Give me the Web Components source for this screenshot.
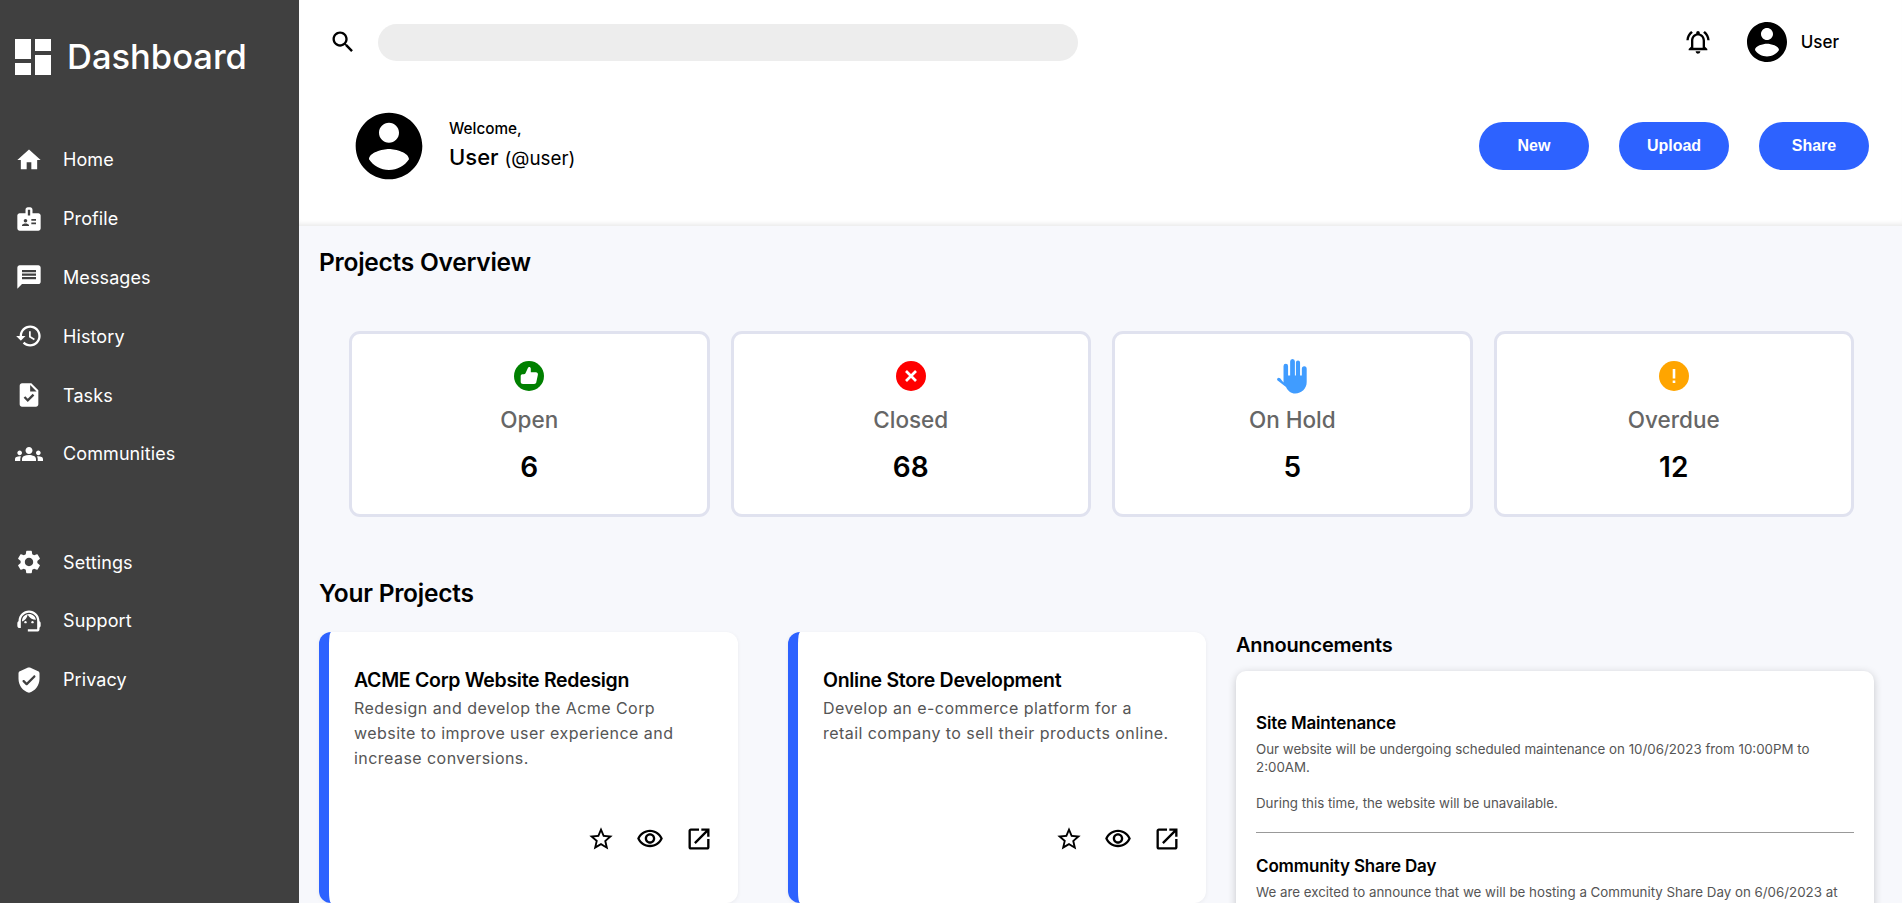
<!DOCTYPE html>
<html lang="en">
<head>
<meta charset="utf-8">
<title>Dashboard</title>
<style>
  html, body { margin: 0; height: 100%; overflow: hidden; }
  body { font-family: Inter, "Liberation Sans", sans-serif; background: #f7f8fc; }
</style>
</head>
<body>
<app-shell>
  <side-bar slot="side">
    <nav-item icon="home">Home</nav-item>
    <nav-item icon="badge">Profile</nav-item>
    <nav-item icon="message">Messages</nav-item>
    <nav-item icon="history">History</nav-item>
    <nav-item icon="task">Tasks</nav-item>
    <nav-item icon="groups">Communities</nav-item>
    <nav-item slot="lower" icon="settings">Settings</nav-item>
    <nav-item slot="lower" icon="support">Support</nav-item>
    <nav-item slot="lower" icon="shield">Privacy</nav-item>
  </side-bar>
  <page-header slot="head">
    <action-button>New</action-button>
    <action-button>Upload</action-button>
    <action-button>Share</action-button>
  </page-header>
  <projects-overview>
    <stat-card kind="open" label="Open" value="6"></stat-card>
    <stat-card kind="closed" label="Closed" value="68"></stat-card>
    <stat-card kind="hold" label="On Hold" value="5"></stat-card>
    <stat-card kind="overdue" label="Overdue" value="12"></stat-card>
  </projects-overview>
  <your-projects>
    <project-card title="ACME Corp Website Redesign">Redesign and develop the Acme Corp website to improve user experience and increase conversions.</project-card>
    <project-card title="Online Store Development">Develop an e-commerce platform for a retail company to sell their products online.</project-card>
    <announce-panel slot="side">
      <announce-item title="Site Maintenance">Our website will be undergoing scheduled maintenance on 10/06/2023 from 10:00PM to 2:00AM.<br><br>During this time, the website will be unavailable.</announce-item>
      <announce-item title="Community Share Day">We are excited to announce that we will be hosting a Community Share Day on 6/06/2023 at</announce-item>
    </announce-panel>
  </your-projects>
</app-shell>

<script>
const ICONS = {
  dashboard: '<path d="M3 13h8V3H3v10zm0 8h8v-6H3v6zm10 0h8V11h-8v10zm0-18v6h8V3h-8z"/>',
  home: '<path d="M10 20v-6h4v6h5v-8h3L12 3 2 12h3v8z"/>',
  badge: '<path d="M20 7h-5V4c0-1.1-.9-2-2-2h-2c-1.1 0-2 .9-2 2v3H4c-1.1 0-2 .9-2 2v11c0 1.1.9 2 2 2h16c1.1 0 2-.9 2-2V9c0-1.1-.9-2-2-2zM9 12c.83 0 1.5.67 1.5 1.5S9.83 15 9 15s-1.5-.67-1.5-1.5S8.17 12 9 12zm3 6H6v-.75c0-1 2-1.5 3-1.5s3 .5 3 1.5V18zm1-9h-2V4h2v5zm5 7.5h-4V15h4v1.5zm0-3h-4V12h4v1.5z"/>',
  message: '<path d="M20 2H4c-1.1 0-1.99.9-1.99 2L2 22l4-4h14c1.1 0 2-.9 2-2V4c0-1.1-.9-2-2-2zm-2 12H6v-2h12v2zm0-3H6V9h12v2zm0-3H6V6h12v2z"/>',
  history: '<path d="M13 3c-4.97 0-9 4.03-9 9H1l3.89 3.89.07.14L9 12H6c0-3.87 3.13-7 7-7s7 3.13 7 7-3.13 7-7 7c-1.93 0-3.68-.79-4.94-2.06l-1.42 1.42C8.27 19.99 10.51 21 13 21c4.97 0 9-4.03 9-9s-4.03-9-9-9zm-1 5v5l4.28 2.54.72-1.21-3.5-2.08V8H12z"/>',
  task: '<path d="M14 2H6c-1.1 0-1.99.9-1.99 2L4 20c0 1.1.89 2 1.99 2H18c1.1 0 2-.9 2-2V8l-6-6zm-3.06 16L7.4 14.46l1.41-1.41 2.12 2.12 4.24-4.24 1.41 1.41L10.94 18zM13 9V3.5L18.5 9H13z"/>',
  groups: '<path d="M12 12.75c1.63 0 3.07.39 4.24.9 1.08.48 1.76 1.56 1.76 2.73V18H6v-1.61c0-1.18.68-2.26 1.76-2.73 1.17-.52 2.61-.91 4.24-.91zM4 13c1.1 0 2-.9 2-2s-.9-2-2-2-2 .9-2 2 .9 2 2 2zm1.13 1.1c-.37-.06-.74-.1-1.13-.1-.99 0-1.93.21-2.78.58C.48 14.9 0 15.62 0 16.43V18h4.5v-1.61c0-.83.23-1.61.63-2.29zM20 13c1.1 0 2-.9 2-2s-.9-2-2-2-2 .9-2 2 .9 2 2 2zm4 3.43c0-.81-.48-1.53-1.22-1.85-.85-.37-1.79-.58-2.78-.58-.39 0-.76.04-1.13.1.4.68.63 1.46.63 2.29V18H24v-1.57zM12 6c1.66 0 3 1.34 3 3s-1.34 3-3 3-3-1.34-3-3 1.34-3 3-3z"/>',
  settings: '<path d="M19.14 12.94c.04-.3.06-.61.06-.94 0-.32-.02-.64-.07-.94l2.03-1.58c.18-.14.23-.41.12-.61l-1.92-3.32c-.12-.22-.37-.29-.59-.22l-2.39.96c-.5-.38-1.03-.7-1.62-.94l-.36-2.54c-.04-.24-.24-.41-.48-.41h-3.84c-.24 0-.43.17-.47.41l-.36 2.54c-.59.24-1.13.57-1.62.94l-2.39-.96c-.22-.08-.47 0-.59.22L2.74 8.87c-.12.21-.08.47.12.61l2.03 1.58c-.05.3-.09.63-.09.94s.02.64.07.94l-2.03 1.58c-.18.14-.23.41-.12.61l1.92 3.32c.12.22.37.29.59.22l2.39-.96c.5.38 1.03.7 1.62.94l.36 2.54c.05.24.24.41.48.41h3.84c.24 0 .44-.17.47-.41l.36-2.54c.59-.24 1.13-.56 1.62-.94l2.39.96c.22.08.47 0 .59-.22l1.92-3.32c.12-.22.07-.47-.12-.61l-2.01-1.58zM12 15.6c-1.98 0-3.6-1.62-3.6-3.6s1.62-3.6 3.6-3.6 3.6 1.62 3.6 3.6-1.62 3.6-3.6 3.6z"/>',
  support: '<path d="M21 12.22C21 6.73 16.74 3 12 3c-4.69 0-9 3.65-9 9.28-.6.34-1 .98-1 1.72v2c0 1.1.9 2 2 2h1v-6.1c0-3.87 3.13-7 7-7s7 3.13 7 7V19h-8v2h8c1.1 0 2-.9 2-2v-1.22c.59-.31 1-.92 1-1.61v-2.3c0-.67-.41-1.28-1-1.65z"/><circle cx="9" cy="13" r="1"/><circle cx="15" cy="13" r="1"/><path d="M18 11.03C17.52 8.18 15.04 6 12.05 6c-3.03 0-6.29 2.51-6.03 6.45 2.47-1.01 4.33-3.21 4.86-5.89 1.31 2.63 4 4.44 7.12 4.47z"/>',
  shield: '<path d="M11.19 1.36l-7 3.11C3.47 4.79 3 5.51 3 6.3V11c0 5.55 3.84 10.74 9 12 5.16-1.26 9-6.45 9-12V6.3c0-.79-.47-1.51-1.19-1.83l-7-3.11c-.51-.23-1.11-.23-1.62 0zm-1.9 14.93L6.7 13.7c-.39-.39-.39-1.02 0-1.41.39-.39 1.02-.39 1.41 0L10 14.17l5.88-5.88c.39-.39 1.02-.39 1.41 0 .39.39.39 1.02 0 1.41l-6.59 6.59c-.38.39-1.02.39-1.41 0z"/>',
  search: '<path d="M15.5 14h-.79l-.28-.27C15.41 12.59 16 11.11 16 9.5 16 5.91 13.09 3 9.5 3S3 5.91 3 9.5 5.91 16 9.5 16c1.61 0 3.09-.59 4.23-1.57l.27.28v.79l5 4.99L20.49 19l-4.99-5zm-6 0C7.01 14 5 11.99 5 9.5S7.01 5 9.5 5 14 7.01 14 9.5 11.99 14 9.5 14z"/>',
  bell: '<path d="M7.58 4.08L6.15 2.65C3.75 4.48 2.17 7.3 2.03 10.5h2c.15-2.65 1.51-4.97 3.55-6.42zm12.39 6.42h2c-.15-3.2-1.73-6.02-4.12-7.85l-1.42 1.43c2.02 1.45 3.39 3.77 3.54 6.42zM18 11c0-3.07-1.64-5.64-4.5-6.32V4c0-.83-.67-1.5-1.5-1.5s-1.5.67-1.5 1.5v.68C7.63 5.36 6 7.92 6 11v5l-2 2v1h16v-1l-2-2v-5zm-2 6H8v-6c0-2.48 1.51-4.5 4-4.5s4 2.02 4 4.5v6zm-4 5c.14 0 .27-.01.4-.04.65-.14 1.18-.58 1.44-1.18.1-.24.15-.5.15-.78h-4c.01 1.1.9 2 2.01 2z"/>',
  account: '<path d="M12 2C6.48 2 2 6.48 2 12s4.48 10 10 10 10-4.48 10-10S17.52 2 12 2zm0 3c1.66 0 3 1.34 3 3s-1.34 3-3 3-3-1.34-3-3 1.34-3 3-3zm0 14.2c-2.5 0-4.71-1.28-6-3.22.03-1.99 4-3.08 6-3.08 1.99 0 5.97 1.09 6 3.08-1.29 1.94-3.5 3.22-6 3.22z"/>',
  star: '<path d="M22 9.24l-7.19-.62L12 2 9.19 8.63 2 9.24l5.46 4.73L5.82 21 12 17.27 18.18 21l-1.63-7.03L22 9.24zM12 15.4l-3.76 2.27 1-4.28-3.32-2.88 4.38-.38L12 6.1l1.71 4.04 4.38.38-3.32 2.88 1 4.28L12 15.4z"/>',
  eye: '<path d="M12 6c3.79 0 7.17 2.13 8.82 5.5C19.17 14.87 15.79 17 12 17s-7.17-2.13-8.82-5.5C4.83 8.13 8.21 6 12 6m0-2C7 4 2.73 7.11 1 11.5 2.73 15.89 7 19 12 19s9.27-3.11 11-7.5C21.27 7.11 17 4 12 4zm0 5c1.38 0 2.5 1.12 2.5 2.5S13.38 14 12 14s-2.5-1.12-2.5-2.5S10.62 9 12 9m0-2c-2.48 0-4.5 2.02-4.5 4.5S9.52 16 12 16s4.5-2.02 4.5-4.5S14.48 7 12 7z"/>',
  external: '<path d="M19 19H5V5h7V3H5c-1.11 0-2 .9-2 2v14c0 1.1.89 2 2 2h14c1.1 0 2-.9 2-2v-7h-2v7zM14 3v2h3.59l-9.83 9.83 1.41 1.41L19 6.41V10h2V3h-7z"/>'
};

const icon = (name, size) =>
  `<svg width="${size}" height="${size}" viewBox="0 0 24 24" fill="currentColor" aria-hidden="true">${ICONS[name]}</svg>`;

class AppShell extends HTMLElement {
  constructor() {
    super();
    this.attachShadow({ mode: 'open' });
  }

  connectedCallback() {
    this.shadowRoot.innerHTML = `
      <style>
        :host { display: grid; grid-template-columns: 299px 1fr; height: 903px; overflow: hidden; }
        .right { display: flex; flex-direction: column; min-width: 0; }
      </style>
      <slot name="side"></slot>
      <div class="right">
        <slot name="head"></slot>
        <slot></slot>
      </div>
    `;
  }
}

class SideBar extends HTMLElement {
  constructor() {
    super();
    this.attachShadow({ mode: 'open' });
  }

  connectedCallback() {
    this.shadowRoot.innerHTML = `
      <style>
        :host { display: block; background: #404040; color: #fff; padding: 33px 0 0 15px; box-sizing: border-box; }
        .logo { display: flex; align-items: center; height: 48px; margin-left: -6px; gap: 10px; }
        .logo span { font-size: 34.5px; font-weight: 500; line-height: 48px; }
        svg { display: block; }
        .upper { margin-top: 49.5px; }
        .lower { margin-top: 49.5px; }
      </style>
      <div class="logo">${icon('dashboard', 48)}<span>Dashboard</span></div>
      <div class="upper"><slot></slot></div>
      <div class="lower"><slot name="lower"></slot></div>
    `;
  }
}

class NavItem extends HTMLElement {
  constructor() {
    super();
    this.attachShadow({ mode: 'open' });
  }

  connectedCallback() {
    this.shadowRoot.innerHTML = `
      <style>
        :host { display: flex; align-items: center; gap: 20px; height: 58.8px; font-size: 18px; letter-spacing: 0.1px; }
        svg { display: block; flex: none; }
      </style>
      ${icon(this.getAttribute('icon'), 28)}
      <span><slot></slot></span>
    `;
  }
}

class PageHeader extends HTMLElement {
  constructor() {
    super();
    this.attachShadow({ mode: 'open' });
  }

  connectedCallback() {
    this.shadowRoot.innerHTML = `
      <style>
        :host { display: block; background: #fff; height: 226px; box-shadow: inset 0 -5px 5px -3px rgba(0, 0, 0, 0.09); color: #000; }
        svg { display: block; flex: none; }
        .top { display: flex; align-items: center; height: 84px; padding: 0 30px; }
        .search { width: 700px; height: 37px; margin-left: 21px; border-radius: 19px; background: #ededed; }
        .right { display: flex; align-items: center; margin-left: auto; }
        .user { font-size: 17px; font-weight: 500; margin-left: 10px; margin-right: 33px; }
        .avatar { margin-left: 31px; }
        .welcome { display: flex; align-items: center; height: 124px; padding: 0 33px 0 50px; }
        .who { margin-left: 20px; }
        .hello { font-size: 15.3px; font-weight: 500; line-height: 22px; }
        .name { margin-top: 1px; font-size: 22px; font-weight: 500; line-height: 32px; }
        .name span { font-size: 18.8px; font-weight: 400; }
        .actions { display: flex; gap: 30px; margin-left: auto; }
      </style>
      <div class="top">
        ${icon('search', 28)}
        <div class="search"></div>
        <div class="right">
          ${icon('bell', 28)}
          <span class="avatar">${icon('account', 48)}</span>
          <span class="user">User</span>
        </div>
      </div>
      <div class="welcome">
        ${icon('account', 80)}
        <div class="who">
          <div class="hello">Welcome,</div>
          <div class="name">User <span>(@user)</span></div>
        </div>
        <div class="actions"><slot></slot></div>
      </div>
    `;
  }
}

class ActionButton extends HTMLElement {
  constructor() {
    super();
    this.attachShadow({ mode: 'open' });
  }

  connectedCallback() {
    this.shadowRoot.innerHTML = `
      <style>
        :host { display: block; }
        button { width: 110px; height: 48px; border: 0; border-radius: 24px; background: #2d62ff; color: #fff; font: bold 16px "Liberation Sans", Arial, sans-serif; }
      </style>
      <button><slot></slot></button>
    `;
  }
}

class ProjectsOverview extends HTMLElement {
  constructor() {
    super();
    this.attachShadow({ mode: 'open' });
  }

  connectedCallback() {
    this.shadowRoot.innerHTML = `
      <style>
        :host { display: block; padding: 17px 48px 0 20px; }
        h2 { margin: 0; font-size: 24.5px; font-weight: 600; line-height: 38px; letter-spacing: -0.25px; color: #000; }
        .grid { display: grid; grid-template-columns: repeat(4, 1fr); gap: 21px; margin: 50px 0 0 30px; }
      </style>
      <h2>Projects Overview</h2>
      <div class="grid"><slot></slot></div>
    `;
  }
}

class StatCard extends HTMLElement {
  constructor() {
    super();
    this.attachShadow({ mode: 'open' });
  }

  badge(kind) {
    if (kind === 'hold') {
      return `<svg width="30" height="35" viewBox="0 0 29 32" preserveAspectRatio="none" fill="#409cff"><path d="M6.300 6.500a2.200 2.200 0 0 1 4.400 0V15h2V2.300a2.300 2.300 0 0 1 4.600 0V15h1V3.300a2 2 0 0 1 4 0V15h1.700V9a2.350 2.350 0 0 1 4.700 0v12c0 6-5 10.500-11 10.500-4.500 0-7-2.500-9-6L.300 19.500c-.9-1.800 1.300-3.300 2.700-1.800l3.300 3.800z"/></svg>`;
    }
    const fill = { open: '#008000', closed: '#ff0000', overdue: '#ffa500' }[kind];
    const inner = {
      open: '<path d="M6.700 15c0-1 .8-1.700 1.700-1.700h1.400c.8 0 1.400-.4 1.700-1.100l2.400-5.300c.6-1.300 2.900-1 2.900.9v3.400h5.100c1.300 0 2.300 1.200 2 2.500l-1.600 7.600c-.2 1-1.100 1.700-2.100 1.700H9c-1.300 0-2.300-1-2.300-2.300z" fill="#fff"/>',
      closed: '<path d="M10 10l10 10M20 10L10 20" stroke="#fff" stroke-width="2.700" fill="none"/>',
      overdue: '<path d="M13.700 8h2.600v9.500h-2.600zM13.700 19.500h2.600v2.600h-2.600z" fill="#fff"/>'
    }[kind];
    return `<svg width="30" height="30" viewBox="0 0 30 30"><circle cx="15" cy="15" r="15" fill="${fill}"/>${inner}</svg>`;
  }

  connectedCallback() {
    this.shadowRoot.innerHTML = `
      <style>
        :host { display: flex; flex-direction: column; align-items: center; box-sizing: border-box; height: 186px; padding-top: 24px; background: #fff; border: 3px solid #e0e2ef; border-radius: 11px; }
        .icon { display: flex; align-items: center; justify-content: center; height: 36px; }
        svg { display: block; }
        .label { margin-top: 3.5px; font-size: 22.5px; font-weight: 500; line-height: 44px; color: #666; }
        .value { margin-top: 2.5px; font-size: 28px; font-weight: 600; line-height: 46px; color: #000; }
      </style>
      <div class="icon">${this.badge(this.getAttribute('kind'))}</div>
      <div class="label">${this.getAttribute('label')}</div>
      <div class="value">${this.getAttribute('value')}</div>
    `;
  }
}

class YourProjects extends HTMLElement {
  constructor() {
    super();
    this.attachShadow({ mode: 'open' });
  }

  connectedCallback() {
    this.shadowRoot.innerHTML = `
      <style>
        :host { display: block; padding: 57px 28px 0 20px; }
        h2 { margin: 0; font-size: 24.5px; font-weight: 600; line-height: 38px; letter-spacing: -0.25px; color: #000; }
        .row { display: grid; grid-template-columns: 419px 418px 1fr; column-gap: 50px; margin-top: 20px; }
        .side { margin-left: -20px; }
      </style>
      <h2>Your Projects</h2>
      <div class="row">
        <slot></slot>
        <div class="side"><slot name="side"></slot></div>
      </div>
    `;
  }
}

class ProjectCard extends HTMLElement {
  constructor() {
    super();
    this.attachShadow({ mode: 'open' });
  }

  connectedCallback() {
    this.shadowRoot.innerHTML = `
      <style>
        :host { display: flex; flex-direction: column; box-sizing: border-box; height: 271px; padding: 35px 25px 50px 25px; background: #fff; border-left: 10px solid #2d62ff; border-radius: 12px; box-shadow: 0 1px 4px rgba(0, 0, 0, 0.06); }
        h3 { margin: 0; font-size: 19.5px; font-weight: 600; line-height: 26px; letter-spacing: -0.3px; color: #000; }
        p { margin: 2.5px 0 0; max-width: 350px; font-size: 16px; line-height: 25px; letter-spacing: 0.45px; color: #555; }
        .tools { display: flex; justify-content: flex-end; gap: 21px; margin-top: auto; color: #000; }
        svg { display: block; }
      </style>
      <h3>${this.getAttribute('title')}</h3>
      <p><slot></slot></p>
      <div class="tools">${icon('star', 28)}${icon('eye', 28)}${icon('external', 28)}</div>
    `;
  }
}

class AnnouncePanel extends HTMLElement {
  constructor() {
    super();
    this.attachShadow({ mode: 'open' });
  }

  connectedCallback() {
    this.shadowRoot.innerHTML = `
      <style>
        :host { display: block; margin-top: -2px; }
        h3 { margin: 0 0 11px; font-size: 20px; font-weight: 600; line-height: 30px; letter-spacing: -0.2px; color: #000; }
        .box { padding: 40px 20px 0; background: #fff; border-radius: 10px; box-shadow: 0 2px 8px rgba(0, 0, 0, 0.2); height: 400px; }
      </style>
      <h3>Announcements</h3>
      <div class="box"><slot></slot></div>
    `;
  }
}

class AnnounceItem extends HTMLElement {
  constructor() {
    super();
    this.attachShadow({ mode: 'open' });
  }

  connectedCallback() {
    this.shadowRoot.innerHTML = `
      <style>
        :host { display: block; padding-bottom: 20px; margin-bottom: 21px; border-bottom: 1px solid #999; }
        :host(:last-child) { border-bottom: 0; }
        h4 { margin: 0 0 5px; font-size: 17px; font-weight: 600; line-height: 24px; letter-spacing: -0.15px; color: #000; }
        p { margin: 0; font-size: 13.33px; line-height: 18px; color: #555; }
      </style>
      <h4>${this.getAttribute('title')}</h4>
      <p><slot></slot></p>
    `;
  }
}

customElements.define('nav-item', NavItem);
customElements.define('side-bar', SideBar);
customElements.define('action-button', ActionButton);
customElements.define('page-header', PageHeader);
customElements.define('stat-card', StatCard);
customElements.define('projects-overview', ProjectsOverview);
customElements.define('project-card', ProjectCard);
customElements.define('your-projects', YourProjects);
customElements.define('announce-item', AnnounceItem);
customElements.define('announce-panel', AnnouncePanel);
customElements.define('app-shell', AppShell);
</script>
</body>
</html>
